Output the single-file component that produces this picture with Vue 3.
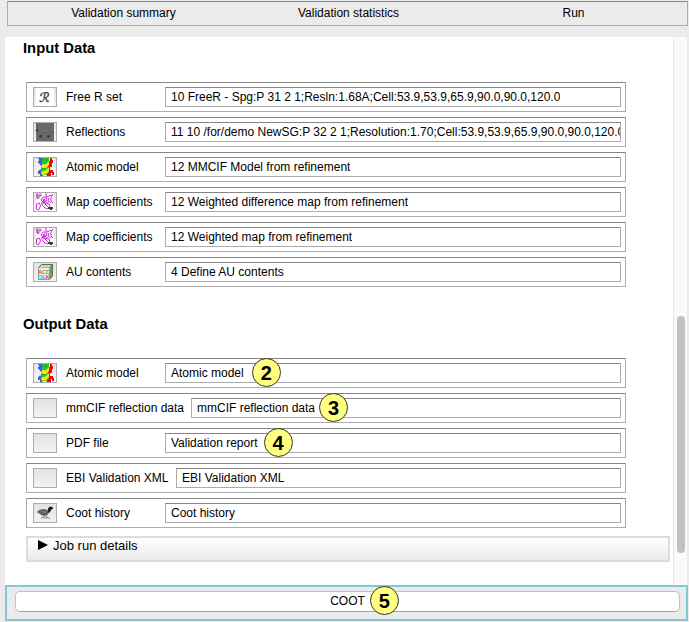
<script setup>
const tabs = ['Validation summary', 'Validation statistics', 'Run']
const inputs = [
  { icon: 'freer', label: 'Free R set', value: '10 FreeR - Spg:P 31 2 1;Resln:1.68A;Cell:53.9,53.9,65.9,90.0,90.0,120.0' },
  { icon: 'spots', label: 'Reflections', value: '11 10 /for/demo NewSG:P 32 2 1;Resolution:1.70;Cell:53.9,53.9,65.9,90.0,90.0,120.0' },
  { icon: 'model', label: 'Atomic model', value: '12 MMCIF Model from refinement' },
  { icon: 'map', label: 'Map coefficients', value: '12 Weighted difference map from refinement' },
  { icon: 'map', label: 'Map coefficients', value: '12 Weighted map from refinement' },
  { icon: 'cube', label: 'AU contents', value: '4 Define AU contents' },
]
const outputs = [
  { icon: 'model', label: 'Atomic model', value: 'Atomic model', badge: 2 },
  { icon: '', label: 'mmCIF reflection data', value: 'mmCIF reflection data', badge: 3, size: 'wide' },
  { icon: '', label: 'PDF file', value: 'Validation report', badge: 4 },
  { icon: '', label: 'EBI Validation XML', value: 'EBI Validation XML', size: 'mid' },
  { icon: 'coot', label: 'Coot history', value: 'Coot history' },
]
const sections = [
  { title: 'Input Data', rows: inputs },
  { title: 'Output Data', rows: outputs },
]
</script>

<template>
  <div class="window">
    <nav class="tabs">
      <span v-for="t in tabs" :key="t" class="tab">{{ t }}</span>
    </nav>
    <main class="pane">
      <div class="content">
        <section v-for="s in sections" :key="s.title" class="section">
          <h2>{{ s.title }}</h2>
          <div class="rows">
            <div v-for="(r, i) in s.rows" :key="i" class="row">
              <span class="icon">
                <svg v-if="r.icon === 'freer'" viewBox="0 0 22 18">
                  <rect x="2" width="18" height="18" fill="#fff" />
                  <text x="10.5" y="14" class="script-r" transform="skewX(-6) translate(1.2 0)">ℛ</text>
                </svg>
                <svg v-else-if="r.icon === 'spots'" viewBox="0 0 22 18">
                  <rect x="2" width="18" height="18" fill="#696969" />
                  <path d="M2 0h2v10H2zM2 9h18v1H2z" fill="#646464" />
                  <path d="M12 2h5v1h-5zM8 7h6v1H8z" fill="#717171" />
                  <circle cx="3" cy="7.3" r="1.2" fill="#3d3d3d" />
                  <circle cx="6.7" cy="13.4" r="1.3" fill="#333" />
                  <circle cx="14.3" cy="13.4" r="1.3" fill="#333" />
                </svg>
                <svg v-else-if="r.icon === 'model'" viewBox="0 0 22 18">
                  <rect x="2" width="18" height="18" fill="#f0f0f0" />
                  <path d="M4 0h5v4l-1 4-2-1-1-2H4V3h1V1H4zM5 12l3-1v3l1 4H6v-2H4v-3h1z" fill="#3b63c8" />
                  <path d="M15 3h1V0h2v2h1v3h-1v4h-2v3h3v2h1v3h-2v-2h-1v3h-4l-1-4 2-3-1-3z" fill="#e80c12" />
                  <path d="M9 0h6v5l-3 3-3-2-1-3zM7 9l4-1 4 2v4l-3 3H9l-2-4z" fill="#1ccc1c" />
                  <path d="M8 7l4-1 3-3v4l-3 3-4 1zM7 14l5-2 3-3v4l-3 3-4 1z" fill="#f4e90f" />
                  <path d="M11 1h2v2h-2zM8 10h3v1H8z" fill="#14a63b" />
                </svg>
                <svg v-else-if="r.icon === 'map'" viewBox="0 0 22 18">
                  <rect x="2" width="18" height="18" fill="#fff" />
                  <g fill="none" stroke="#c72dd0" stroke-width="1">
                    <path d="M3.5 0l-1 2 1 3 1 1M6 0v3l2-1M12 0v3l2 1 2-2 2 1M19 1l-2 3v4l2 2M2.5 11l3-1 1 3-2 4-2-1z" />
                    <path d="M7 7l2-3h3l1 2-1 2-3 1zM8 9l3-1 4 3 1 3-2 2-3-1-3-3zM9 6l2 5 3 3M11 5l-2 5 5 1M15 5l-1 3 3 2" />
                    <path d="M3 2h2v3H3z" />
                  </g>
                  <path d="M14 14h5v2h-1v1h-2v-1h-2z" fill="#44333c" />
                </svg>
                <svg v-else-if="r.icon === 'cube'" viewBox="0 0 22 18">
                  <path d="M4.5 4.5l3-3h11v11l-3 4h-11z" fill="#cbd2c6" stroke="#626957" />
                  <path d="M15.5 4.5l3-3v11l-3 4z" fill="#849079" stroke="#626957" />
                  <path d="M4.5 4.5h11v12h-11z" fill="#e7f0ef" stroke="#919f8b" stroke-width=".6" />
                  <g class="cube-letters">
                    <text x="4" y="10.5" fill="#f13f3f">A</text>
                    <text x="8" y="10.5" fill="#ef604a">C</text>
                    <text x="11.8" y="10.5" fill="#36cf50">D</text>
                    <text x="3.8" y="16" fill="#40bce7">Q</text>
                    <text x="8.3" y="16" fill="#30a5ed">L</text>
                    <text x="11.5" y="16" fill="#f04141">K</text>
                  </g>
                </svg>
                <svg v-else-if="r.icon === 'coot'" viewBox="0 0 22 18">
                  <path d="M3 8l2-2 4-1 5 1 1-2 2-1 2 1v1h-2l-1 3-3 3-3 1-3-1-2-2-3-1z" fill="#625a63" />
                  <path d="M14 5l1-2 2-.5 2 1.5v1l-2 .5-1 3-2-1z" fill="#19171c" />
                  <path d="M7 7l5 1-3 1M4 8.5l4 2" stroke="#867b84" stroke-width=".8" fill="none" />
                  <path d="M11 11l-1 2-3 1M12 10.5l1 3 3 1M10 14h3" stroke="#777177" stroke-width=".9" fill="none" />
                </svg>
              </span>
              <span class="label" :class="r.size">{{ r.label }}</span>
              <span class="field">
                <span class="value">{{ r.value }}</span>
                <span v-if="r.badge" class="anchor"><b class="badge">{{ r.badge }}</b></span>
              </span>
            </div>
          </div>
        </section>
        <div class="details">
          <svg class="arrow" viewBox="0 0 10 10"><path d="M0 0L10 5L0 10z" /></svg>
          <span>Job run details</span>
        </div>
      </div>
      <div class="track"><div class="thumb"></div></div>
    </main>
    <footer class="actions">
      <button class="coot">
        <span>COOT</span>
        <span class="anchor"><b class="badge">5</b></span>
      </button>
    </footer>
  </div>
</template>

<style>
body { margin: 0; background: #ebebeb; overflow: hidden; }
</style>

<style scoped>
.window {
  box-sizing: border-box;
  width: 689px;
  height: 622px;
  padding: 1px 1px 1px 5px;
  display: flex;
  flex-direction: column;
  background: #ebebeb;
  color: #000;
  font: 12px/18px "Liberation Sans", Arial, sans-serif;
  overflow: hidden;
}
.tabs {
  box-sizing: border-box;
  flex: none;
  height: 25px;
  margin-left: 2px;
  display: grid;
  grid-template-columns: 231px 219px 231px;
  border: 1px solid #acacac;
  border-top-color: #858585;
}
.tab { text-align: center; line-height: 23px; }
.pane {
  flex: none;
  display: flex;
  height: 548px;
  margin: 11px 1px 0 0;
  background: #fff;
}
.content { flex: 1; padding-left: 18px; }
.section { height: 276px; }
h2 { margin: 0; height: 45px; font-size: 14.8px; line-height: 22px; font-weight: bold; }
.rows { display: flex; flex-direction: column; gap: 5px; margin-left: 3px; width: 600px; }
.row {
  box-sizing: border-box;
  height: 30px;
  display: flex;
  align-items: center;
  padding: 0 4px 0 6px;
  border: 1px solid #acacac;
  border-top-color: #858585;
}
.icon {
  box-sizing: border-box;
  width: 24px;
  height: 20px;
  border: 1px solid #acacac;
  background: linear-gradient(#e2e2e2, #f3f3f3);
}
.icon svg { display: block; width: 22px; height: 18px; }
.script-r {
  font: 13px "DejaVu Serif", "DejaVu Sans", serif;
  text-anchor: middle;
  fill: #333;
  stroke: #333;
  stroke-width: .35;
}
.cube-letters { font: bold 6px "Liberation Sans", sans-serif; }
.label { width: 99px; margin-left: 9px; white-space: nowrap; }
.label.wide { width: 125px; }
.label.mid { width: 110px; }
.field {
  box-sizing: border-box;
  flex: 1;
  min-width: 0;
  height: 20px;
  display: flex;
  border: 1px solid #acacac;
  border-top-color: #858585;
  padding-left: 5px;
}
.value { overflow: hidden; white-space: nowrap; }
.anchor { position: relative; width: 0; }
.badge {
  position: absolute;
  box-sizing: border-box;
  left: 8px;
  top: -6px;
  width: 29px;
  height: 29px;
  border: 1px solid #333;
  border-radius: 50%;
  background: #ffff80;
  font-size: 20px;
  line-height: 28px;
  text-align: center;
}
.row:nth-child(2) .badge { left: 4px; }
.row:nth-child(3) .badge { left: 6px; }
.details {
  box-sizing: border-box;
  width: 644px;
  height: 26px;
  margin: -53px 0 0 3px;
  display: flex;
  gap: 5px;
  padding: 0 0 0 10px;
  border: 2px solid #dcdcdc;
  background: linear-gradient(#fff, #ebebeb);
  font-size: 13px;
  line-height: 16px;
}
.arrow { width: 10px; height: 10px; margin-top: 2px; }
.track {
  box-sizing: border-box;
  width: 14px;
  padding: 279px 2px 0 3px;
  border-left: 1px solid #e5e5e5;
  background: #fafafa;
}
.thumb { height: 237px; border-radius: 4px; background: #c1c1c1; }
.actions {
  box-sizing: border-box;
  flex: none;
  height: 36px;
  padding: 4px 6px 0 8px;
  border: 2px solid #84c8d3;
}
.coot {
  box-sizing: border-box;
  width: 100%;
  height: 21px;
  display: flex;
  justify-content: center;
  padding: 0;
  border: 1px solid #c1c1c1;
  border-bottom-color: #a4a4a4;
  border-radius: 5px;
  background: #fff;
  color: #000;
  font: inherit;
}
.coot .badge { left: 5px; }
</style>
